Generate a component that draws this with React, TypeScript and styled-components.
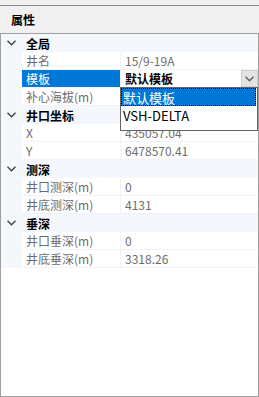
import React from "react";
import styled, { createGlobalStyle } from "styled-components";

const Global = createGlobalStyle`
  html, body { margin: 0; padding: 0; overflow: hidden; }
  body {
    background: #fff;
    font-family: "Noto Sans CJK SC", "Liberation Sans", sans-serif;
    font-size: 12px;
  }
`;

const Panel = styled.div`
  width: 259px;
  height: 397px;
  display: grid;
  grid-template-rows: 5px 28px 364px;
  background: #f0f0f0;
`;

const Spacer = styled.div``;

const Title = styled.div`
  display: flex;
  align-items: center;
  padding-left: 11px;
  font-weight: bold;
  color: #000;
  font-size: 12px;
  border-top: 1px solid #8c8c8c;
`;

const Grid = styled.div`
  position: relative;
  box-sizing: border-box;
  background: #fff;
  border: 1px solid #a0a0a0;
  display: flex;
  flex-direction: column;
`;

const Row = styled.div`
  display: grid;
  grid-template-columns: 21px 99px 1fr;
  height: 18px;
  flex: none;
  box-sizing: border-box;
`;

const Gutter = styled.div`
  background: #f4f7fc;
  display: flex;
  align-items: center;
  justify-content: center;
`;

const CategoryRow = styled(Row)`
  background: #f4f7fc;
`;

const CategoryText = styled.div`
  grid-column: 2 / 4;
  display: flex;
  align-items: center;
  padding-left: 4px;
  font-weight: bold;
  color: #000;
`;

const LabelCell = styled.div<{ $selected?: boolean }>`
  display: flex;
  align-items: center;
  padding-left: 4px;
  border-right: 1px solid #f0f3f8;
  border-bottom: 1px solid #f0f3f8;
  background: ${(p) => (p.$selected ? "#0078d7" : "#fff")};
  color: ${(p) => (p.$selected ? "#fff" : "#6d6d6d")};
  white-space: nowrap;
  overflow: hidden;
`;

const ValueCell = styled.div<{ $bold?: boolean }>`
  position: relative;
  display: flex;
  align-items: center;
  padding-left: 4px;
  border-bottom: 1px solid #f0f3f8;
  color: ${(p) => (p.$bold ? "#000" : "#6d6d6d")};
  font-weight: ${(p) => (p.$bold ? "bold" : "normal")};
  white-space: nowrap;
`;

const DropButton = styled.div`
  position: absolute;
  right: 0;
  top: 0;
  width: 17px;
  height: 17px;
  background: #e3e3e3;
  border: 1px solid #d0d0d0;
  box-sizing: border-box;
  display: flex;
  align-items: center;
  justify-content: center;
`;

const DropList = styled.div`
  position: absolute;
  top: 53px;
  left: 119px;
  width: 138px;
  height: 44px;
  box-sizing: border-box;
  background: #fff;
  border: 1px solid #646464;
  display: flex;
  flex-direction: column;
`;

const DropItem = styled.div<{ $active?: boolean }>`
  height: 18px;
  flex: none;
  box-sizing: border-box;
  display: flex;
  align-items: center;
  padding-left: 1px;
  margin-right: 1px;
  background: ${(p) => (p.$active ? "#0078d7" : "transparent")};
  color: ${(p) => (p.$active ? "#fff" : "#000")};
  border: 1px ${(p) => (p.$active ? "dotted #000" : "solid transparent")};
  font-size: 13px;
`;

const Chevron = ({ color = "#404040" }: { color?: string }) => (
  <svg width="9" height="6" viewBox="0 0 9 6">
    <path d="M0.5 0.8 L4.5 4.8 L8.5 0.8" fill="none" stroke={color} strokeWidth="1.3" />
  </svg>
);

type Prop = { label: string; value: string };
type Cat = { name: string; props: Prop[] };

const data: Cat[] = [
  {
    name: "全局",
    props: [
      { label: "井名", value: "15/9-19A" },
      { label: "模板", value: "默认模板" },
      { label: "补心海拔(m)", value: "" },
    ],
  },
  {
    name: "井口坐标",
    props: [
      { label: "X", value: "435057.04" },
      { label: "Y", value: "6478570.41" },
    ],
  },
  {
    name: "测深",
    props: [
      { label: "井口测深(m)", value: "0" },
      { label: "井底测深(m)", value: "4131" },
    ],
  },
  {
    name: "垂深",
    props: [
      { label: "井口垂深(m)", value: "0" },
      { label: "井底垂深(m)", value: "3318.26" },
    ],
  },
];

export default function App() {
  return (
    <>
      <Global />
      <Panel>
        <Spacer />
        <Title>属性</Title>
        <Grid>
          {data.map((cat) => (
            <React.Fragment key={cat.name}>
              <CategoryRow>
                <Gutter>
                  <Chevron />
                </Gutter>
                <CategoryText>{cat.name}</CategoryText>
              </CategoryRow>
              {cat.props.map((p) => {
                const isSel = p.label === "模板";
                return (
                  <Row key={p.label}>
                    <Gutter />
                    <LabelCell $selected={isSel}>{p.label}</LabelCell>
                    <ValueCell $bold={isSel}>
                      {p.value}
                      {isSel && (
                        <DropButton>
                          <Chevron color="#606060" />
                        </DropButton>
                      )}
                    </ValueCell>
                  </Row>
                );
              })}
            </React.Fragment>
          ))}
          <DropList>
            <DropItem $active>默认模板</DropItem>
            <DropItem>VSH-DELTA</DropItem>
          </DropList>
        </Grid>
      </Panel>
    </>
  );
}
